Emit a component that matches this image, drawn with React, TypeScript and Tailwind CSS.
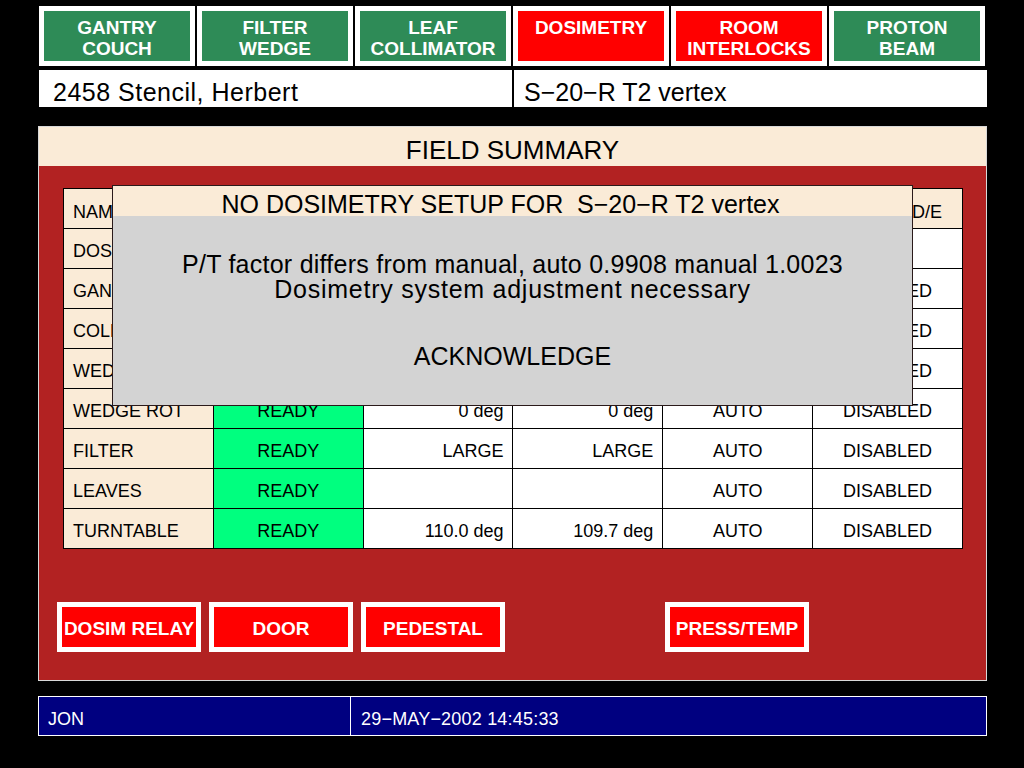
import React from "react";

const topButtons = [
  { l1: "GANTRY", l2: "COUCH", red: false },
  { l1: "FILTER", l2: "WEDGE", red: false },
  { l1: "LEAF", l2: "COLLIMATOR", red: false },
  { l1: "DOSIMETRY", l2: "", red: true },
  { l1: "ROOM", l2: "INTERLOCKS", red: true },
  { l1: "PROTON", l2: "BEAM", red: false },
];

type Row = { name: string; status: string; a: string; b: string; mode: string; de: string };

const rows: Row[] = [
  { name: "DOSIMETRY", status: "READY", a: "", b: "", mode: "", de: "" },
  { name: "GANTRY", status: "READY", a: "180.0 deg", b: "180.0 deg", mode: "AUTO", de: "DISABLED" },
  { name: "COLLIMATOR", status: "READY", a: "359.2 deg", b: "359.2 deg", mode: "AUTO", de: "DISABLED" },
  { name: "WEDGE", status: "READY", a: "NONE", b: "NONE", mode: "AUTO", de: "DISABLED" },
  { name: "WEDGE ROT", status: "READY", a: "0 deg", b: "0 deg", mode: "AUTO", de: "DISABLED" },
  { name: "FILTER", status: "READY", a: "LARGE", b: "LARGE", mode: "AUTO", de: "DISABLED" },
  { name: "LEAVES", status: "READY", a: "", b: "", mode: "AUTO", de: "DISABLED" },
  { name: "TURNTABLE", status: "READY", a: "110.0 deg", b: "109.7 deg", mode: "AUTO", de: "DISABLED" },
];

const cell = "h-[40px] border-r border-b border-black flex items-center text-[18px] text-black";

export default function App() {
  return (
    <div
      className="relative w-[1024px] h-[768px] bg-black overflow-hidden"
      style={{ fontFamily: '"Liberation Sans", Arial, sans-serif' }}
    >
      {/* top buttons */}
      <div className="flex gap-[2px] pt-[6px] pl-[39px]">
        {topButtons.map((b) => (
          <div
            key={b.l1}
            className={`w-[156px] h-[60px] border-[5px] border-white flex flex-col items-center pt-[6px] text-white font-bold text-[19px] leading-[21px] ${
              b.red ? "bg-[#ff0000]" : "bg-[#2e8b57]"
            }`}
          >
            <span>{b.l1}</span>
            {b.l2 && <span>{b.l2}</span>}
          </div>
        ))}
      </div>

      {/* patient row */}
      <div className="flex gap-[2px] mt-[4px] ml-[39px]">
        <div className="w-[473px] h-[37px] bg-white flex items-center pl-[14px] text-[25px] tracking-[0.5px] text-black pt-[8px]">
          2458 Stencil, Herbert
        </div>
        <div className="w-[473px] h-[37px] bg-white flex items-center pl-[10px] text-[25px] text-black pt-[8px]">
          S−20−R T2 vertex
        </div>
      </div>

      {/* field summary panel */}
      <div className="mt-[19px] ml-[38px] w-[949px] h-[555px] border border-[#d8d8d8] bg-[#b22222] flex flex-col">
        <div className="h-[39px] bg-[#faebd7] flex items-center justify-center text-[26px] text-black pt-[8px]">
          FIELD SUMMARY
        </div>
        <div className="ml-[24px] mt-[22px] w-[900px] grid grid-cols-6 border-l border-t border-black">
          <div className={`${cell} bg-[#faebd7] pl-[9px] pt-[7px]`}>NAME</div>
          <div className={`${cell} bg-[#faebd7] justify-center pt-[7px]`}>STATUS</div>
          <div className={`${cell} bg-[#faebd7] justify-end pr-[9px] pt-[7px]`}>ACTUAL</div>
          <div className={`${cell} bg-[#faebd7] justify-end pr-[9px] pt-[7px]`}>PRESCRIBED</div>
          <div className={`${cell} bg-[#faebd7] justify-center pt-[7px]`}>MODE</div>
          <div className={`${cell} bg-[#faebd7] justify-end pr-[20px] pt-[7px]`}>OVR/ENABLED/E</div>
          {rows.map((r) => (
            <React.Fragment key={r.name}>
              <div className={`${cell} bg-[#faebd7] pl-[9px] pt-[6px]`}>{r.name}</div>
              <div className={`${cell} bg-[#00ff7f] justify-center pt-[6px]`}>{r.status}</div>
              <div className={`${cell} bg-white justify-end pr-[9px] pt-[6px]`}>{r.a}</div>
              <div className={`${cell} bg-white justify-end pr-[9px] pt-[6px]`}>{r.b}</div>
              <div className={`${cell} bg-white justify-center pt-[6px]`}>{r.mode}</div>
              <div className={`${cell} bg-white justify-center pt-[6px]`}>{r.de}</div>
            </React.Fragment>
          ))}
        </div>

        <div className="flex gap-[8px] ml-[18px] mt-[53px]">
          {["DOSIM RELAY", "DOOR", "PEDESTAL", "", "PRESS/TEMP"].map((t, i) =>
            t ? (
              <div
                key={i}
                className="w-[144px] h-[50px] border-[5px] border-white bg-[#ff0000] flex items-center justify-center text-white font-bold text-[19px] pt-[5px]"
              >
                {t}
              </div>
            ) : (
              <div key={i} className="w-[144px] h-[50px]" />
            )
          )}
        </div>
      </div>

      {/* status bar */}
      <div className="mt-[15px] ml-[38px] w-[949px] h-[40px] border border-white bg-[#000080] flex text-white text-[18px]">
        <div className="w-[312px] h-full border-r border-white flex items-center pl-[9px] pt-[6px]">JON</div>
        <div className="flex-1 flex items-center pl-[10px] pt-[6px] tracking-[0.2px]">29−MAY−2002 14:45:33</div>
      </div>

      {/* dialog */}
      <div className="absolute left-[112px] top-[185px] w-[801px] h-[221px] border border-[#2a1a1a] bg-[#d3d3d3] flex flex-col text-black">
        <div className="h-[30px] bg-[#faebd7] flex items-center justify-center text-[25px] pt-[7px] pr-[24px]">
          NO DOSIMETRY SETUP FOR&nbsp; S−20−R T2 vertex
        </div>
        <div className="flex flex-col items-center text-[25px] leading-[25px] mt-[36px]">
          <span className="tracking-[0.25px]">P/T factor differs from manual, auto 0.9908 manual 1.0023</span>
          <span className="tracking-[0.75px]">Dosimetry system adjustment necessary</span>
        </div>
        <div className="flex justify-center text-[25px] mt-[36px]">ACKNOWLEDGE</div>
      </div>
    </div>
  );
}
